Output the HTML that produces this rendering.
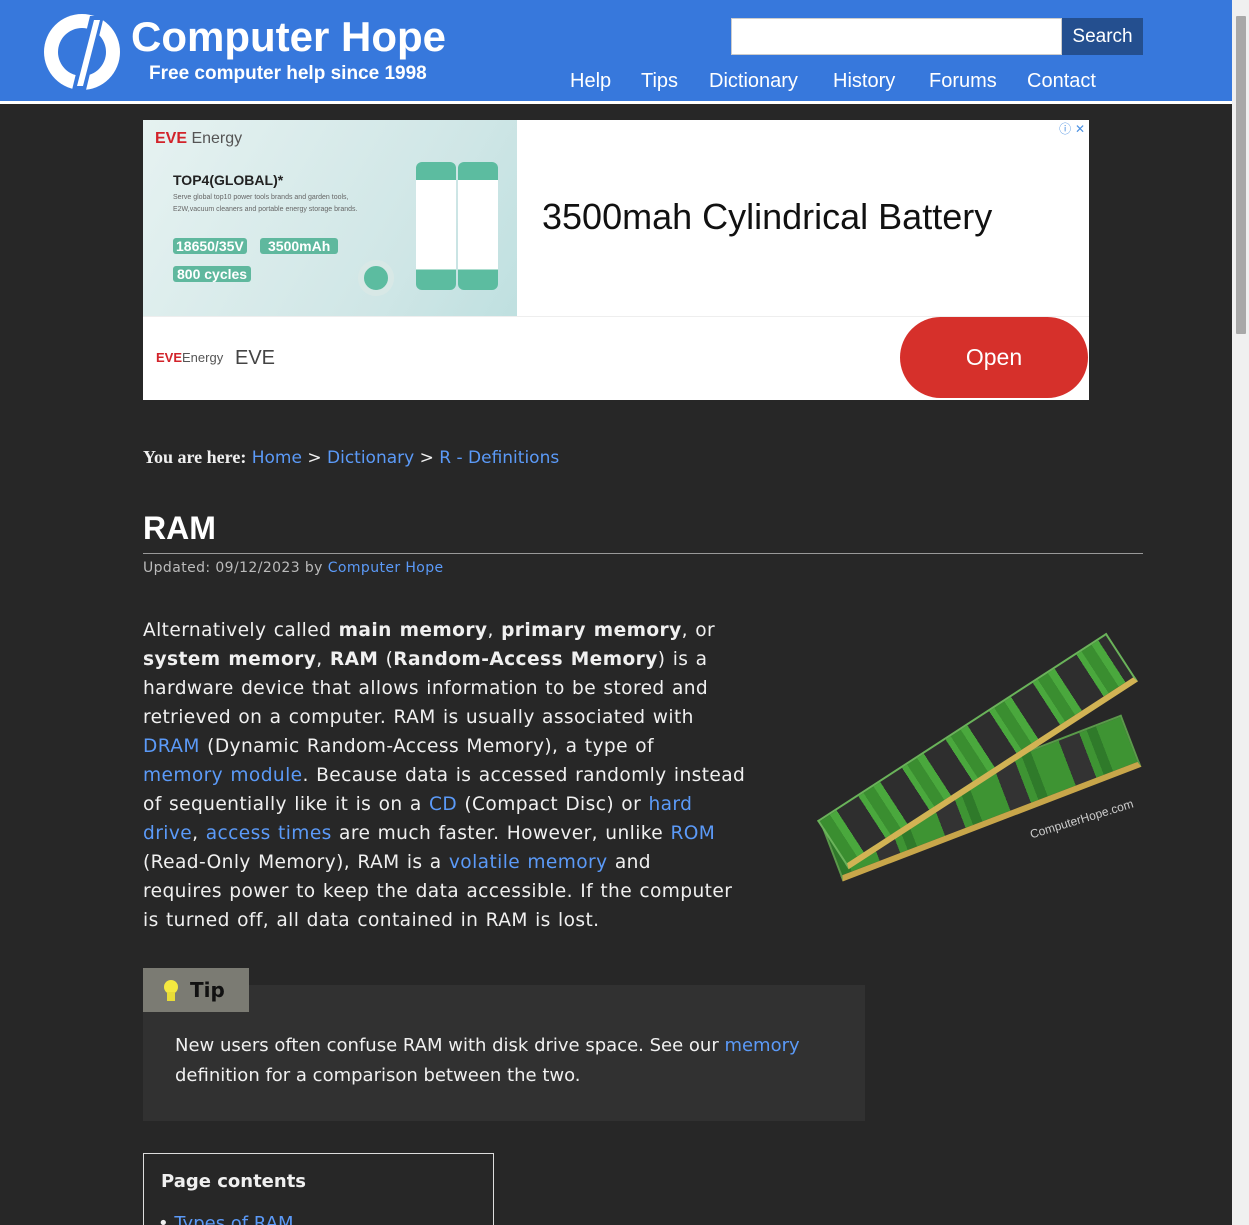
<!DOCTYPE html>
<html><head><meta charset="utf-8"><style>
*{margin:0;padding:0;box-sizing:border-box}
html,body{width:1249px;height:1225px;overflow:hidden}
body{background:#272727;font-family:"DejaVu Sans",Verdana,sans-serif;color:#f0f0f0;position:relative}
a{color:#5b9af8;text-decoration:none}
.hdr{position:absolute;left:0;top:0;width:1232px;background:#3778dc;border-bottom:3px solid #fff;height:104px}
.abs{position:absolute}
.nav a{color:#fff;font-family:"Liberation Sans",Arial,sans-serif;font-size:20px;position:absolute;top:70px}
.sb{position:absolute;right:0;top:0;width:17px;height:1225px;background:#f0f0f0}
.sb div{position:absolute;left:4px;top:16px;width:10px;height:318px;background:#a8a8a8;border-radius:1px}
.p{position:absolute;left:143px;top:616px;width:660px;white-space:nowrap;font-size:18.6px;line-height:29px;letter-spacing:0.4px;word-spacing:1px}
.p b{font-weight:bold}
</style></head><body>
<div class="hdr">
  <svg class="abs" style="left:42px;top:12px" width="80" height="80" viewBox="0 0 80 80">
    <circle cx="40" cy="40" r="38" fill="#fff"/>
    <circle cx="40" cy="40" r="24" fill="#3778dc"/>
    <polygon points="48,4 62,4 44,78 30,78" fill="#3778dc"/>
    <polygon points="52,8 58,8 41,74 35,74" fill="#fff"/>
  </svg>
  <div class="abs" style="left:131px;top:12px;font-family:'Liberation Sans',Arial,sans-serif;font-weight:bold;font-size:42px;color:#fff;line-height:50px">Computer Hope</div>
  <div class="abs" style="left:149px;top:63px;font-family:'Liberation Sans',Arial,sans-serif;font-weight:bold;font-size:19px;color:#fff">Free computer help since 1998</div>
  <div class="abs" style="left:731px;top:18px;width:331px;height:37px;background:#fff;border:1px solid #ccc"></div>
  <div class="abs" style="left:1062px;top:18px;width:81px;height:37px;background:#244f8f;color:#fff;font-family:'Liberation Sans',Arial,sans-serif;font-size:19px;line-height:38px;text-align:center">Search</div>
  <div class="nav"><a style="left:570px">Help</a><a style="left:641px">Tips</a><a style="left:709px">Dictionary</a><a style="left:833px">History</a><a style="left:929px">Forums</a><a style="left:1027px">Contact</a></div>
</div>
<div class="sb"><div></div></div>

<div class="abs" style="left:143px;top:120px;width:946px;height:280px;background:#fff">
  <div class="abs" style="left:0;top:0;width:374px;height:196px;background:linear-gradient(120deg,#e6f2f1,#cfe6e6 70%,#bfe0e0)">
    <div class="abs" style="left:12px;top:10px;font-family:'Liberation Sans';font-size:16px;color:#555"><b style="color:#d2232a">EVE</b> Energy</div>
    <div class="abs" style="left:30px;top:52px;font-family:'Liberation Sans';font-weight:bold;font-size:14px;color:#222">TOP4(GLOBAL)*</div>
    <div class="abs" style="left:30px;top:72px;font-family:'Liberation Sans';font-size:7px;color:#666;line-height:12px">Serve global top10 power tools brands and garden tools,<br>E2W,vacuum cleaners and portable energy storage brands.</div>
    <div class="abs" style="left:30px;top:118px;background:#5fb89e;color:#fff;font-family:'Liberation Sans';font-weight:bold;font-size:14px;padding:0 3px;border-radius:3px">18650/35V</div>
    <div class="abs" style="left:117px;top:118px;background:#5fb89e;color:#fff;font-family:'Liberation Sans';font-weight:bold;font-size:14px;padding:0 8px;border-radius:3px">3500mAh</div>
    <div class="abs" style="left:30px;top:146px;background:#5fb89e;color:#fff;font-family:'Liberation Sans';font-weight:bold;font-size:14px;padding:0 4px;border-radius:3px">800 cycles</div>
    <div class="abs" style="left:273px;top:42px;width:40px;height:128px;background:linear-gradient(#5cbca0 14%,#fff 14%,#fff 84%,#5cbca0 84%);border-radius:6px"></div>
    <div class="abs" style="left:315px;top:42px;width:40px;height:128px;background:linear-gradient(#5cbca0 14%,#fff 14%,#fff 84%,#5cbca0 84%);border-radius:6px"></div>
    <div class="abs" style="left:215px;top:140px;width:36px;height:36px;border-radius:50%;background:#5cbca0;border:6px solid #d8e8e6"></div>
  </div>
  <div class="abs" style="left:399px;top:76px;font-family:'Liberation Sans';font-size:36px;color:#111">3500mah Cylindrical Battery</div>
  <div class="abs" style="right:4px;top:0px;font-size:12px;color:#4a90e2">ⓘ ✕</div>
  <div class="abs" style="left:0;top:196px;width:946px;height:1px;background:#eee"></div>
  <div class="abs" style="left:13px;top:230px;font-family:'Liberation Sans';font-size:13px;color:#555"><b style="color:#d2232a">EVE</b>Energy</div>
  <div class="abs" style="left:92px;top:227px;font-family:'Liberation Sans';font-size:20px;color:#444">EVE</div>
  <div class="abs" style="left:757px;top:197px;width:188px;height:81px;background:#d6302b;border-radius:41px;color:#fff;font-family:'Liberation Sans';font-size:23px;line-height:81px;text-align:center">Open</div>
</div>

<div class="abs" style="left:143px;top:447px;font-size:17px"><b style="font-family:'Liberation Serif',Georgia,serif;font-size:18px">You are here:</b> <a>Home</a> &gt; <a>Dictionary</a> &gt; <a>R - Definitions</a></div>
<div class="abs" style="left:143px;top:510px;font-family:'Liberation Sans',Arial,sans-serif;font-weight:bold;font-size:32px;color:#fff">RAM</div>
<div class="abs" style="left:143px;top:553px;width:1000px;height:1px;background:#999"></div>
<div class="abs" style="left:143px;top:560px;font-size:14px;color:#bbb;letter-spacing:0.4px">Updated: 09/12/2023 by <a>Computer Hope</a></div>

<div class="p">Alternatively called <b>main memory</b>, <b>primary memory</b>, or<br><b>system memory</b>, <b>RAM</b> (<b>Random-Access Memory</b>) is a<br>hardware device that allows information to be stored and<br>retrieved on a computer. RAM is usually associated with<br><a>DRAM</a> (Dynamic Random-Access Memory), a type of<br><a>memory module</a>. Because data is accessed randomly instead<br>of sequentially like it is on a <a>CD</a> (Compact Disc) or <a>hard</a><br><a>drive</a>, <a>access times</a> are much faster. However, unlike <a>ROM</a><br>(Read-Only Memory), RAM is a <a>volatile memory</a> and<br>requires power to keep the data accessible. If the computer<br>is turned off, all data contained in RAM is lost.</div>

<div class="abs" style="left:822px;top:770px;width:320px;height:56px;background:repeating-linear-gradient(90deg,#2f7a2a 0 10px,#3e9433 10px 40px,#333 40px 62px,#3e9433 62px 70px);border:2px solid #5a9a4a;border-bottom:6px solid #c8a64a;transform:rotate(-21deg);transform-origin:center"></div>
<div class="abs" style="left:805px;top:722px;width:345px;height:58px;background:repeating-linear-gradient(90deg,#3a8e30 0 12px,#4aa83d 12px 20px,#2e2e2e 20px 46px,#4aa83d 46px 52px);border:2px solid #6ab35a;border-bottom:6px solid #d2b354;transform:rotate(-33deg);transform-origin:center"></div>
<div class="abs" style="left:1028px;top:812px;font-family:'Liberation Sans';font-size:12px;color:#ccc;transform:rotate(-17deg)">ComputerHope.com</div>

<div class="abs" style="left:143px;top:985px;width:722px;height:136px;background:#313131"></div>
<div class="abs" style="left:143px;top:968px;width:106px;height:44px;background:#7b7b73"></div>
<div class="abs" style="left:164px;top:980px;width:14px;height:14px;border-radius:50%;background:#f4e840"></div>
<div class="abs" style="left:167px;top:992px;width:8px;height:9px;background:#e8dc38"></div>
<div class="abs" style="left:190px;top:978px;font-weight:bold;font-size:20px;color:#111">Tip</div>
<div class="abs" style="left:175px;top:1031px;width:680px;font-size:18px;line-height:30px">New users often confuse RAM with disk drive space. See our <a>memory</a> definition for a comparison between the two.</div>

<div class="abs" style="left:143px;top:1153px;width:351px;height:80px;border:1px solid #ddd"></div>
<div class="abs" style="left:161px;top:1171px;font-weight:bold;font-size:18px">Page contents</div>
<div class="abs" style="left:158px;top:1213px;font-size:18px">• <a>Types of RAM</a></div>
</body></html>
